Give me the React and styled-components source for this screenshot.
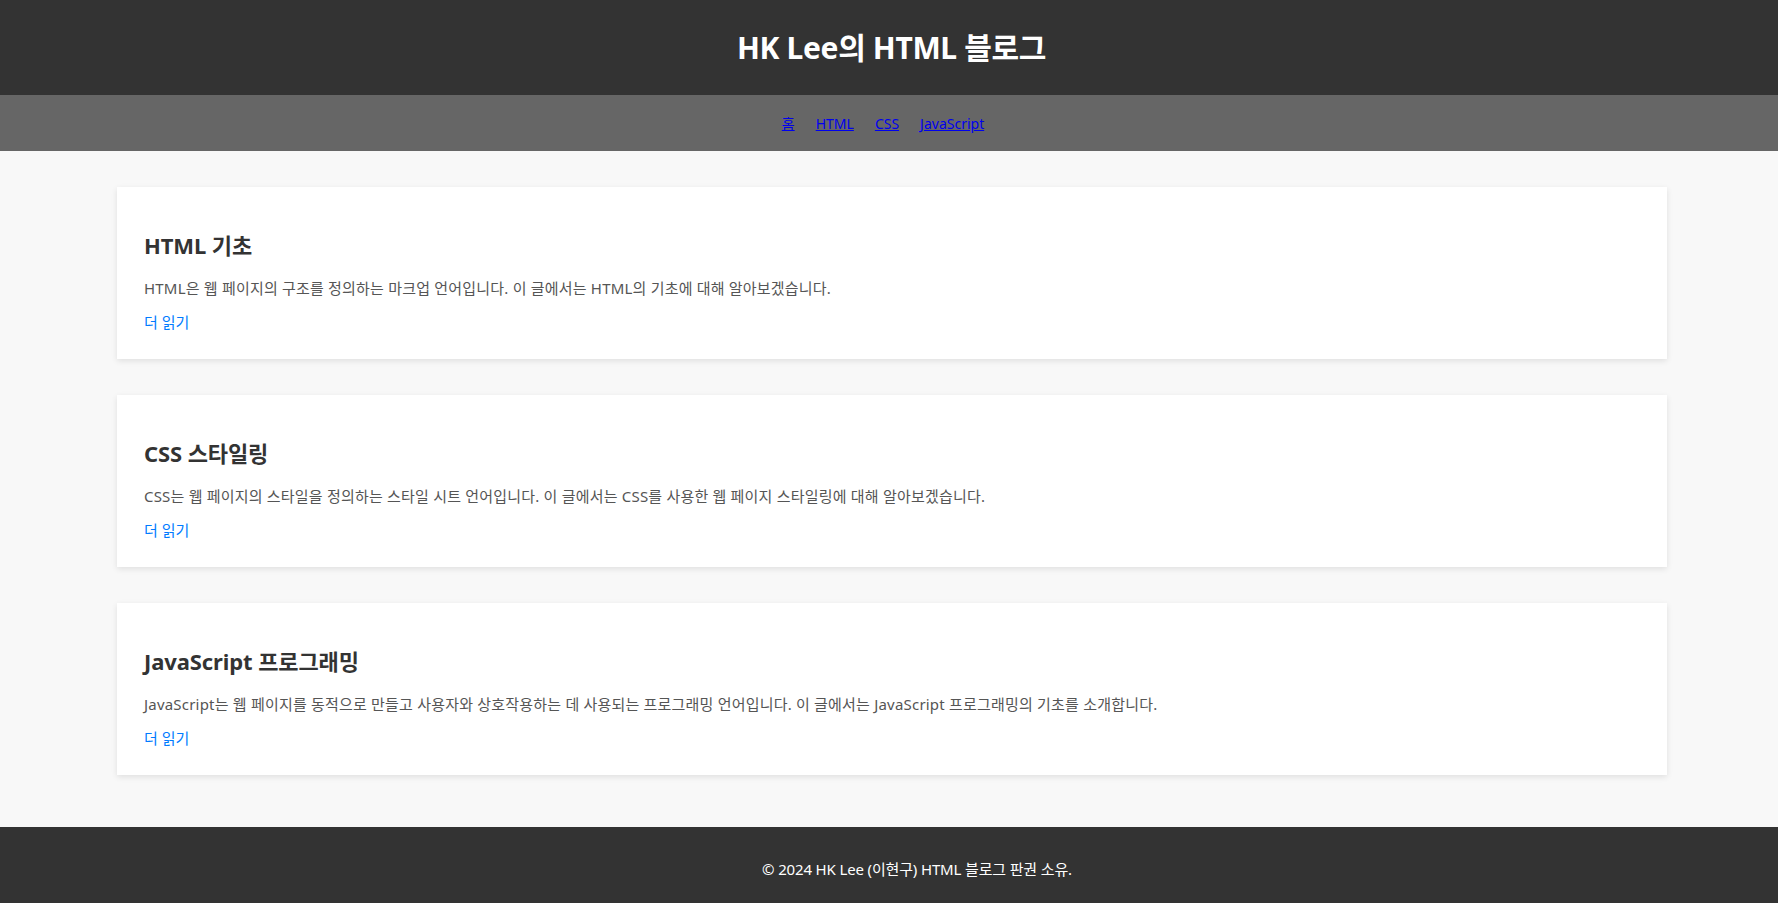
import styled, { createGlobalStyle } from 'styled-components';

const GlobalStyle = createGlobalStyle`
  * { box-sizing: border-box; }
  body {
    margin: 0;
    background: #f8f8f8;
    font-family: "Noto Sans", "Noto Sans CJK KR", sans-serif;
    color: #333;
  }
`

const Header = styled.header`
  height: 95px;
  padding-left: 5px;
  background: #333;
  display: flex;
  align-items: center;
  justify-content: center;
`

const SiteTitle = styled.h1`
  margin: 0;
  font-size: 30px;
  line-height: 40px;
  letter-spacing: -0.35px;
  font-weight: 700;
  color: #fff;
`

const Nav = styled.nav`
  height: 56px;
  padding: 2px 12px 0 0;
  background: #666;
  display: flex;
  align-items: center;
  justify-content: center;
  gap: 21px;
`

const NavLink = styled.a`
  font-size: 14px;
  line-height: 20px;
  color: #0000ee;
  text-decoration: underline;
`

const Main = styled.main`
  display: flex;
  flex-direction: column;
  gap: 36px;
  padding: 36px 111px 52px 117px;
`

const Article = styled.article`
  background: #fff;
  padding: 42px 27px 27px 27px;
  box-shadow: 0 2px 6px rgba(0, 0, 0, 0.1);
`

const ArticleTitle = styled.h2`
  margin: 0 0 17px 0;
  font-size: 22px;
  line-height: 32px;
  letter-spacing: -0.1px;
  font-weight: 700;
  color: #333;
`

const Summary = styled.p`
  margin: 0 0 14px 0;
  font-size: 15px;
  line-height: 20px;
  letter-spacing: 0.2px;
  color: #555;
`

const ReadMore = styled.a`
  display: block;
  font-size: 15px;
  line-height: 20px;
  color: #007bff;
  text-decoration: none;
`

const Footer = styled.footer`
  background: #333;
  color: #fff;
  text-align: center;
  padding: 32px 0 24px 56px;
  font-size: 15px;
  line-height: 20px;
  letter-spacing: -0.15px;
`

const posts = [
  {
    title: 'HTML 기초',
    summary: 'HTML은 웹 페이지의 구조를 정의하는 마크업 언어입니다. 이 글에서는 HTML의 기초에 대해 알아보겠습니다.',
  },
  {
    title: 'CSS 스타일링',
    summary: 'CSS는 웹 페이지의 스타일을 정의하는 스타일 시트 언어입니다. 이 글에서는 CSS를 사용한 웹 페이지 스타일링에 대해 알아보겠습니다.',
  },
  {
    title: 'JavaScript 프로그래밍',
    summary: 'JavaScript는 웹 페이지를 동적으로 만들고 사용자와 상호작용하는 데 사용되는 프로그래밍 언어입니다. 이 글에서는 JavaScript 프로그래밍의 기초를 소개합니다.',
  },
]

function App() {
  return (
    <>
      <GlobalStyle />
      <Header>
        <SiteTitle>HK Lee의 HTML 블로그</SiteTitle>
      </Header>
      <Nav>
        <NavLink href="#">홈</NavLink>
        <NavLink href="#">HTML</NavLink>
        <NavLink href="#">CSS</NavLink>
        <NavLink href="#">JavaScript</NavLink>
      </Nav>
      <Main>
        {posts.map((post) => (
          <Article key={post.title}>
            <ArticleTitle>{post.title}</ArticleTitle>
            <Summary>{post.summary}</Summary>
            <ReadMore href="#">더 읽기</ReadMore>
          </Article>
        ))}
      </Main>
      <Footer>© 2024 HK Lee (이현구) HTML 블로그 판권 소유.</Footer>
    </>
  );
}

export default App;
